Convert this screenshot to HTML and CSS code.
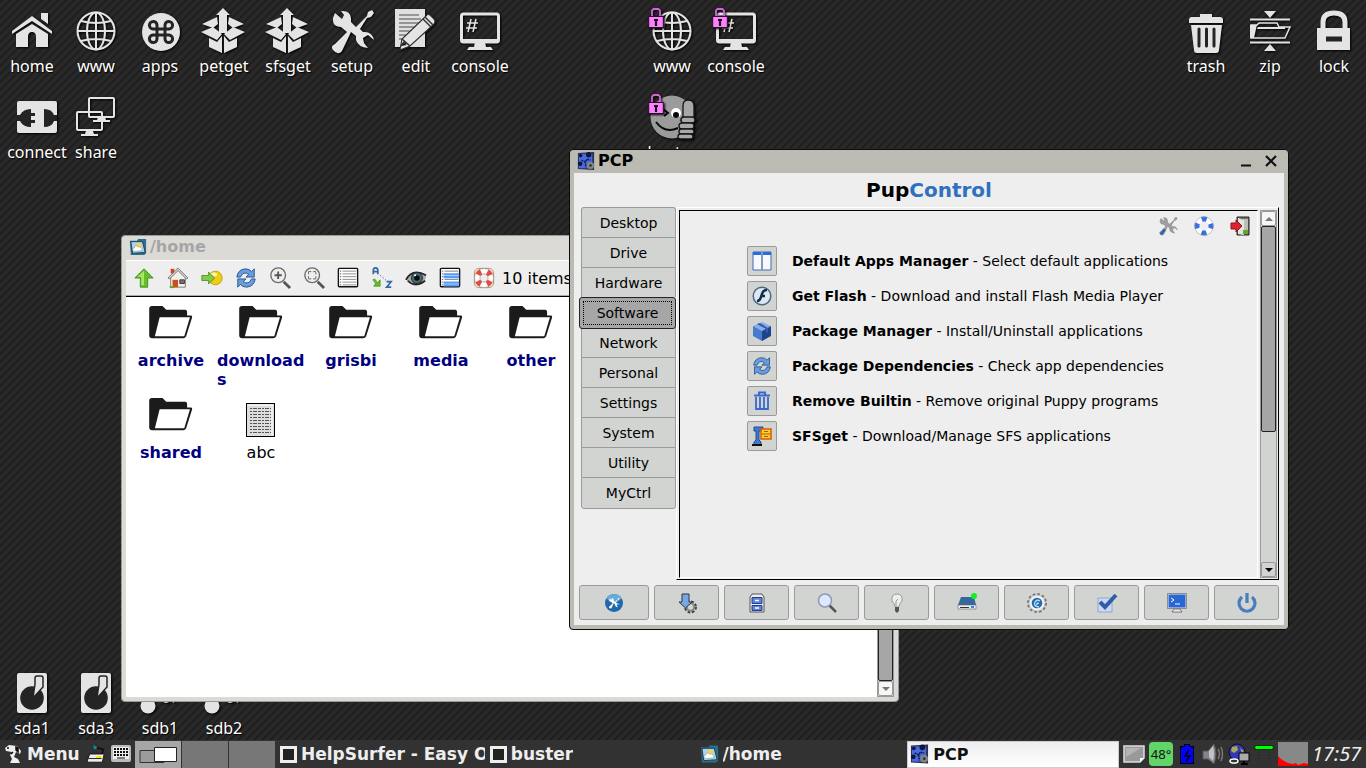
FILE: index.html
```html
<!DOCTYPE html>
<html lang="en">
<head>
<meta charset="utf-8">
<title>Desktop</title>
<link rel="stylesheet" href="styles.css">
</head>
<body>
<svg class="defs" aria-hidden="true">
  <symbol id="globe" viewBox="0 0 48 48"><g fill="none" stroke="#e4e4e4" stroke-width="2"><circle cx="24" cy="24" r="18.500"/><ellipse cx="24" cy="24" rx="9" ry="18.500"/><path d="M24 5v38M5 24h38M9 14q15 4 30 0M9 34q15-4 30 0"/></g></symbol>
  <symbol id="box" viewBox="0 0 48 48"><g fill="#e4e4e4"><path d="M23 1l7 7h-3v18h-8V8h-3z"/><path fill-rule="evenodd" d="M17 10L2 17l11 4 5-4zM29 10l15 7-11 4-5-4z"/><path d="M13 20L1 25l16 8 5-6zM33 20l12 5-15 8-6-6zM9 31l8 4 5-6v17L9 40zM37 31l-8 4-5-6v17l13-6z"/></g></symbol>
  <symbol id="screen" viewBox="0 0 48 48"><rect x="5.500" y="7" width="37" height="28" rx="2" fill="none" stroke="#e4e4e4" stroke-width="3"/><path d="M5 32h38v3H5zM19 35h10l1 5h5l2 3H11l2-3h5z" fill="#e4e4e4"/><path d="M15 12l-3 13M20 12l-3 13M11 16h11M10 21h11" stroke="#e4e4e4" stroke-width="1.500"/></symbol>
  <symbol id="padlock" viewBox="0 0 16 20"><path d="M4 9V2.500L5.500 1h5L12 2.500V9" fill="none" stroke="#d860d8" stroke-width="1.800"/><rect x=".7" y="8.500" width="14.600" height="11" fill="#ff80ff" stroke="#281028"/><path d="M8 11v7M6 12h4" stroke="#111" stroke-width="2.200"/></symbol>
  <symbol id="disk" viewBox="0 0 48 48"><rect x="9" y="4" width="30" height="40" rx="2" fill="#e4e4e4"/><circle cx="24" cy="29" r="11.800" fill="#242424"/><path d="M25 29l2-14V9q0-2 2-2h4q2 0 2 2v9z" fill="#e4e4e4" stroke="#242424" stroke-width="1.500"/></symbol>
  <symbol id="usb" viewBox="0 0 48 48"><g fill="#e4e4e4"><circle cx="12" cy="37" r="7.500"/><circle cx="30" cy="29" r="5"/><path d="M35 28l5 4-3 2z"/></g></symbol>
  <symbol id="folder" viewBox="0 0 48 38"><path d="M4 1h11l4 4h20q2 0 2 3v3h4q2 0 1 3l-6 19q-1 2-3 2H4q-3 0-3-3V4q0-3 3-3z" fill="#1b1b1b"/><path d="M12 13h32l-6 20H7z" fill="#fff"/></symbol>
  <symbol id="gears" viewBox="0 0 20 20"><path d="M1 1l18-1v20L1 19z" fill="#2a3050"/><path d="M2 2h15v16H2z" fill="#4a6be0"/><g fill="#10163a"><circle cx="13" cy="3" r="3"/><circle cx="4" cy="4" r="2"/><circle cx="3.500" cy="13" r="2.500"/></g><path d="M5 9l4 2 2-3 4 1M9 11l1 6" fill="none" stroke="#10163a" stroke-width="1.600" stroke-dasharray="2 .8"/><circle cx="15" cy="15" r="4" fill="#858585"/><circle cx="15" cy="15" r="1.500" fill="#333"/></symbol>
  <symbol id="view" viewBox="0 0 20 20"><path d="M1 3h8l1-2h9v16l-2 2H2z" fill="#2b6f91"/><path d="M2 4h13l3 12-14 1z" fill="#a9d5e6" stroke="#183849"/><circle cx="11" cy="8" r="2.500" fill="#ffd338"/><path d="M5 15q-2-4 1-4 1-4 4-1 4-1 5 4z" fill="#fff" stroke="#7b8d94" stroke-width=".6"/></symbol>
  <symbol id="list" viewBox="0 0 24 24"><rect x="1.500" y="1.500" width="21" height="20" rx="1" fill="#fff" stroke="#111" stroke-width="1.500"/><path d="M6 4.500h15M6 7.500h15M6 10.500h15M6 13.500h15M6 16.500h15M6 19.500h15" stroke="#888"/><path d="M4 4v16" stroke="#222" stroke-dasharray="1 2"/></symbol>
  <symbol id="refresh" viewBox="0 0 24 24"><g fill="#6a9ce0" stroke="#24528f"><path d="M2 11Q3 3 11 2q5 0 7 3l3-3v9h-9l3-3q-6-4-9 3z"/><path d="M22 13q-1 8-9 9-5 0-7-3l-3 3v-9h9l-3 3q6 4 9-3z"/></g></symbol>
  <symbol id="tools" viewBox="0 0 48 48"><path d="M7 6l7 6 2-4-3-4q9-1 10 7v4l5 5L39 9l1-4 4-2 2 3-3 4-4 1-7 11 3 3q9-1 11 8l-6-5-5 3 1 5 4 5q-10-1-12-8v-4l-5-4L14 44q-4 5-9-1-3-4 2-6l12-12-6-5q-9 0-8-9z"/></symbol>
</svg>

<main class="desktop">
  <nav class="top-icons" aria-label="Desktop">
    <div class="icons">
      <button class="launcher"><svg viewBox="0 0 48 48"><path d="M4 24L24 9l20 15v3L24 14 4 27zM33 6h7v11l-7-5zM8 27l16-10 16 10v13H28V30q0-5-4-5t-4 5v10H8z" fill="#e4e4e4"/></svg><span>home</span></button>
      <button class="launcher"><svg><use href="#globe"/></svg><span>www</span></button>
      <button class="launcher"><svg viewBox="0 0 48 48"><circle cx="25" cy="25" r="19" fill="#e4e4e4"/><path d="M21 29V18a3.800 3.800 0 1 0-4 4h16a3.800 3.800 0 1 0-4-4v14a3.800 3.800 0 1 0 4-4H17a3.800 3.800 0 1 0 4 4z" fill="none" stroke="#242424" stroke-width="3"/></svg><span>apps</span></button>
      <button class="launcher"><svg><use href="#box"/></svg><span>petget</span></button>
      <button class="launcher"><svg><use href="#box"/></svg><span>sfsget</span></button>
      <button class="launcher"><svg fill="#e4e4e4"><use href="#tools"/></svg><span>setup</span></button>
      <button class="launcher"><svg viewBox="0 0 48 48"><path d="M3 2h30v38H3z" fill="#e0e0e0"/><path d="M7 8h20M7 12h22M7 16h22M7 20h19M7 24h16M7 28h13M7 32h9" stroke="#7d7d7d" stroke-width="1.500"/><path d="M8 43l2-11L34 9q2-3 5 0l3 3q2 2 0 5L18 39z" fill="#e4e4e4" stroke="#333" stroke-width="1.200"/><path d="M31 12l8 8M33 10l8 8M10 32l8 7M9 39l3-4 2 3" stroke="#333" stroke-width="1.500"/></svg><span>edit</span></button>
      <button class="launcher"><svg><use href="#screen"/></svg><span>console</span></button>
      <button class="launcher wide"><svg viewBox="0 0 48 48"><rect x="4" y="8" width="40" height="32" rx="2" fill="#e4e4e4"/><path d="M4 22h3q3-6 11-6v4h4v3h-4v4h4v3h-4v4q-8 0-11-6H4zM44 22h-3q-2-6-10-6v18q8 0 10-6h3z" fill="#242424"/></svg><span>connect</span></button>
      <button class="launcher"><svg viewBox="0 0 48 48"><g fill="none" stroke="#e4e4e4" stroke-width="2"><rect x="17" y="5" width="25" height="19" rx="1"/><rect x="5" y="19" width="25" height="18" rx="1"/></g><path d="M26 24h7l1 3h4v2H21v-2h4zM14 38h7l1 3h4v2H9v-2h4z" fill="#e4e4e4"/></svg><span>share</span></button>
    </div>
    <div class="icons pair">
      <button class="launcher"><svg><use href="#globe"/></svg><svg class="lock"><use href="#padlock"/></svg><span>www</span></button>
      <button class="launcher"><svg><use href="#screen"/></svg><svg class="lock"><use href="#padlock"/></svg><span>console</span></button>
      <button class="launcher"><svg viewBox="0 0 48 48"><circle cx="24" cy="24" r="21.500" fill="#9b9b9b"/><circle cx="28" cy="20" r="5" fill="#fff"/><circle cx="28" cy="22" r="3" fill="#080808"/><path d="M8 29q9 12 22 6M15 16l5 4-4 3" fill="none" stroke="#080808" stroke-width="2"/><g fill="#a8a8a8" stroke="#151515" stroke-width="1.300"><path d="M35 25V13q0-6 5-6 6 0 6 6v14H33z"/><rect x="33" y="24" width="14" height="6" rx="3"/><rect x="31" y="30" width="15" height="6" rx="3"/><rect x="31" y="36" width="15" height="5" rx="2.500"/><rect x="30" y="41" width="15" height="5" rx="2.500"/></g></svg><svg class="lock"><use href="#padlock"/></svg><span>buster</span></button>
    </div>
    <div class="icons right">
      <button class="launcher"><svg viewBox="0 0 48 48"><path d="M7 13q0-3 3-3h8V7h12v3h8q3 0 3 3v3H7zM9 18h31l-3 25q0 3-3 3H15q-3 0-3-3z" fill="#e4e4e4"/><path d="M17 22v17M24.500 22v17M32 22v17" stroke="#242424" stroke-width="3" stroke-linecap="round"/></svg><span>trash</span></button>
      <button class="launcher"><svg viewBox="0 0 48 48"><path d="M18 4h12l-6 7zM18 44h12l-6-7z" fill="#e4e4e4"/><path d="M4 12.500h40M4 35.500h40" stroke="#e4e4e4" stroke-width="2"/><path d="M5 31V18h6l2-2h18l2 4h11l-5 11z" fill="none" stroke="#e4e4e4" stroke-width="1.500"/><path d="M4 18h7l-1 4-2 9H4zM12 20h27v2H11z" fill="#e4e4e4"/></svg><span>zip</span></button>
      <button class="launcher"><svg viewBox="0 0 48 48"><path d="M13 23v-8q0-9 11-9t11 9v8" fill="none" stroke="#e4e4e4" stroke-width="5"/><rect x="7" y="21" width="33" height="22" fill="#e4e4e4"/><path d="M16 32h16" stroke="#242424" stroke-width="5"/></svg><span>lock</span></button>
    </div>
  </nav>
  <nav class="icons drives" aria-label="Drives">
    <button class="launcher"><svg><use href="#disk"/></svg><span>sda1</span></button>
    <button class="launcher"><svg><use href="#disk"/></svg><span>sda3</span></button>
    <button class="launcher"><svg><use href="#usb"/></svg><span>sdb1</span></button>
    <button class="launcher"><svg><use href="#usb"/></svg><span>sdb2</span></button>
  </nav>

  <section class="window files" aria-label="/home">
    <header class="title"><svg><use href="#view"/></svg><h2>/home</h2></header>
    <div class="toolbar">
      <button aria-label="Up"><svg viewBox="0 0 24 24"><path d="M12 2l10 10h-6v10H8V12H2z" fill="#68bd2d" stroke="#3f901a"/><path d="M12 4v16H9V11H5z" fill="#a7e765"/></svg></button>
      <button aria-label="Home"><svg viewBox="0 0 24 24"><path d="M4 2h4v5H4z" fill="#d14520"/><path d="M4 10l8-7 8 7v12H4z" fill="#f4f1ec" stroke="#777"/><path d="M1 12L12 1l11 11-2 1-9-9-9 9z" fill="#ccc" stroke="#555" stroke-width=".7"/><path d="M6 14h6v8H6z" fill="#d24c18"/><path d="M14 14h5v4h-5z" fill="#777" stroke="#333"/><path d="M3 22h5" stroke="#5ca530" stroke-width="2"/></svg></button>
      <button aria-label="Mount"><svg viewBox="0 0 26 24"><circle cx="17" cy="12" r="8" fill="#efcd13" stroke="#b89900"/><ellipse cx="15" cy="8" rx="4" ry="2.500" fill="#fff799"/><path d="M1 9h8V5l7 7-7 7v-4H1z" fill="#85c84b" stroke="#4b8b20"/></svg></button>
      <button aria-label="Refresh"><svg><use href="#refresh"/></svg></button>
      <button aria-label="Zoom in"><svg viewBox="0 0 24 24"><path d="M16 16l7 7" stroke="#555" stroke-width="3"/><circle cx="10" cy="9" r="8" fill="#eee" stroke="#6b6b67" stroke-width="1.500"/><path d="M6 9h8M10 5v8" stroke="#555" stroke-width="2"/></svg></button>
      <button aria-label="Zoom fit"><svg viewBox="0 0 24 24"><path d="M16 16l7 7" stroke="#555" stroke-width="3"/><circle cx="10" cy="9" r="8" fill="#eee" stroke="#6b6b67" stroke-width="1.500"/><path d="M6 8V5h3M11 5h3v3M14 10v3h-3M9 13H6v-3" fill="none" stroke="#666"/></svg></button>
      <button aria-label="Details"><svg><use href="#list"/></svg></button>
      <button aria-label="Sort"><svg viewBox="0 0 24 24"><path d="M2.500 8V4q0-3 2.500-3t2.500 3v4M2.500 5h5M17 16h5l-5 6h5" fill="none" stroke="#3465a4" stroke-width="1.800"/><path d="M10 9l7 6" stroke="#3465a4" stroke-dasharray="1.500 2"/><path d="M2 14l2-1 3 4 3-3v7H3l2-3z" fill="#65bd27" stroke="#3f8b12" stroke-width=".7"/></svg></button>
      <button aria-label="Hidden"><svg viewBox="0 0 24 24"><path d="M1 13Q8 2 23 9q-1 9-8 11Q7 22 1 13z" fill="#aaa9a4"/><path d="M1 14Q8 1 23 9M3 15q8 8 19 0" stroke="#222" stroke-width="1.800" fill="none"/><circle cx="13" cy="12" r="6" fill="#496873" stroke="#1c292e"/><circle cx="13" cy="12" r="3" fill="#080808"/><circle cx="11" cy="9" r="1.200" fill="#fff"/></svg></button>
      <button aria-label="Select"><svg viewBox="0 0 24 24"><rect x="1.500" y="1.500" width="21" height="20" rx="1" fill="#fff" stroke="#111" stroke-width="1.500"/><path d="M6 4.500h15M6 13.500h15" stroke="#777"/><path d="M5 8h17M5 11h17M5 17h17M5 20h17" stroke="#589cf5" stroke-width="2.500"/><path d="M4 4v16" stroke="#222" stroke-dasharray="1 2"/></svg></button>
      <button aria-label="Help"><svg viewBox="0 0 24 24"><rect x="1.500" y="1.500" width="21" height="21" rx="5" fill="none" stroke="#b78b4d"/><circle cx="12" cy="12" r="7.500" fill="none" stroke="#fff" stroke-width="6"/><circle cx="12" cy="12" r="7.500" fill="none" stroke="#ef4444" stroke-width="6" stroke-dasharray="4.780 7" stroke-dashoffset="-3.500"/><g fill="none" stroke="#777" stroke-width=".6"><circle cx="12" cy="12" r="10.500"/><circle cx="12" cy="12" r="4.500"/></g></svg></button>
      <span class="count">10 items</span>
    </div>
    <div class="file-pane">
      <ul class="file-grid">
        <li><svg><use href="#folder"/></svg><b>archive</b></li>
        <li><svg><use href="#folder"/></svg><b>downloads</b></li>
        <li><svg><use href="#folder"/></svg><b>grisbi</b></li>
        <li><svg><use href="#folder"/></svg><b>media</b></li>
        <li><svg><use href="#folder"/></svg><b>other</b></li>
        <li><svg><use href="#folder"/></svg><b>shared</b></li>
        <li><svg class="doc" viewBox="0 0 30 35"><rect x=".5" y=".5" width="28" height="33" fill="#ddd" stroke="#000"/><path d="M2 2h24v30" fill="none" stroke="#fff"/><g stroke="#555" stroke-dasharray="2 1 4 1 3 1"><path d="M4 5.500h21M4 8.500h21M4 11.500h21M4 14.500h21M4 17.500h21M4 20.500h21M4 23.500h21M4 26.500h21M4 29.500h21"/></g></svg><span>abc</span></li>
      </ul>
      <div class="scroll pale"><i class="thumb"></i><button class="arrow" aria-label="Scroll down"><svg viewBox="0 0 12 12"><path d="M2 4h8L6 8z" fill="#777"/></svg></button></div>
    </div>
  </section>

  <section class="window pcp" aria-label="PCP">
    <header class="title"><svg><use href="#gears"/></svg><h2>PCP</h2>
      <button class="wbtn" aria-label="Minimize"><svg viewBox="0 0 12 12"><path d="M1 10.500h10" stroke="#111" stroke-width="2"/></svg></button>
      <button class="wbtn" aria-label="Close"><svg viewBox="0 0 12 12"><path d="M1 1l10 10M11 1L1 11" stroke="#111" stroke-width="2.200"/></svg></button>
    </header>
    <div class="panel">
      <h1>Pup<em>Control</em></h1>
      <div class="work">
        <nav class="tabs">
          <button>Desktop</button><button>Drive</button><button>Hardware</button><button class="active"><span>Software</span></button><button>Network</button><button>Personal</button><button>Settings</button><button>System</button><button>Utility</button><button>MyCtrl</button>
        </nav>
        <div class="frame">
          <div class="view">
            <div class="quick">
              <button aria-label="Preferences"><svg viewBox="0 0 48 48"><use href="#tools" width="48" height="48" fill="#9b9fa3" stroke="#777" stroke-width="1"/><path d="M14 30l5 4-9 11q-4 1-6-3z" fill="#2d63ad"/></svg></button>
              <button aria-label="Help"><svg viewBox="0 0 20 20"><circle cx="10" cy="10" r="7" fill="none" stroke="#fff" stroke-width="5"/><circle cx="10" cy="10" r="7" fill="none" stroke="#386fe0" stroke-width="5" stroke-dasharray="5 6" stroke-dashoffset="2.500"/><circle cx="10" cy="10" r="9.300" fill="none" stroke="#999" stroke-width=".6"/></svg></button>
              <button aria-label="Exit"><svg viewBox="0 0 20 20"><path d="M7 1h12v18H7z" fill="#6d7564" stroke="#222"/><path d="M13 3h5v15h-5z" fill="#b9c1b4"/><path d="M8 2l6 2v15l-6-1z" fill="#e3e6df"/><path d="M13 14h5v4h-5z" fill="#68a52b"/><path d="M1 7h5V4l6 6-6 6v-3H1z" fill="#dc262f" stroke="#8c1017"/></svg></button>
            </div>
            <ul class="apps">
              <li><button id="a1"><svg viewBox="0 0 20 20"><path d="M1 1h18v18H1z" fill="#f7f9ff" stroke="#3d69b5"/><path d="M1 2.500h18" stroke="#286de0" stroke-width="3"/><path d="M10 1v18" stroke="#8598b5" stroke-width="2"/></svg></button><label for="a1"><b>Default Apps Manager</b> - Select default applications</label></li>
              <li><button id="a2"><svg viewBox="0 0 20 20"><circle cx="10" cy="10" r="8.800" fill="#dce7f2" stroke="#4e6680" stroke-width="1.500"/><path d="M15 4q-4 0-5 4l-1 3q-1 4-4 4M9 10h4" fill="none" stroke="#102d4d" stroke-width="2.500"/></svg></button><label for="a2"><b>Get Flash</b> - Download and install Flash Media Player</label></li>
              <li><button id="a3"><svg viewBox="0 0 20 20"><path d="M10 1l9 4-9 5-9-5z" fill="#88ade8"/><path d="M1 5l9 5v10l-9-5z" fill="#477bcf"/><path d="M19 5l-9 5v10l9-5z" fill="#1e438f"/><path d="M5 3l9 5v4l2-1V7L8 2z" fill="#315db1"/></svg></button><label for="a3"><b>Package Manager</b> - Install/Uninstall applications</label></li>
              <li><button id="a4"><svg><use href="#refresh"/></svg></button><label for="a4"><b>Package Dependencies</b> - Check app dependencies</label></li>
              <li><button id="a5"><svg viewBox="0 0 20 20"><path d="M2 4.500h16M7 4V1.500h6V4" fill="none" stroke="#3869ce" stroke-width="2"/><path d="M4 6v12h12V6M8 6v12M12 6v12" fill="none" stroke="#3869ce" stroke-width="1.800"/></svg></button><label for="a5"><b>Remove Builtin</b> - Remove original Puppy programs</label></li>
              <li><button id="a6"><svg viewBox="0 0 20 20"><path d="M2 1h9v4H7v9l2 2v3H2v-3l2-2V5H2z" fill="#3d7bd0" stroke="#204c8e"/><path d="M0 19h10" stroke="#111" stroke-width="2"/><path d="M9 3h10v10H9z" fill="#ffd030" stroke="#e05a00" stroke-width="1.500"/><path d="M10 8h8M12 5.500h4M12 10.500h4" stroke="#a65c00"/></svg></button><label for="a6"><b>SFSget</b> - Download/Manage SFS applications</label></li>
            </ul>
          </div>
          <div class="scroll"><button class="arrow light" aria-label="Scroll up"><svg viewBox="0 0 12 12"><path d="M2 8h8L6 4z" fill="#777"/></svg></button><i class="thumb"></i><i class="track"></i><button class="arrow" aria-label="Scroll down"><svg viewBox="0 0 12 12"><path d="M2 4h8L6 8z" fill="#000"/></svg></button></div>
        </div>
      </div>
      <div class="actions">
        <button aria-label="Wizards"><svg viewBox="0 0 20 20"><circle cx="10" cy="10" r="9" fill="#1f68ab"/><ellipse cx="10" cy="5" rx="7" ry="4" fill="#69a9d7"/><use href="#tools" x="4" y="4" width="12" height="12" fill="#fff"/></svg></button>
        <button aria-label="Install"><svg viewBox="0 0 20 20"><circle cx="13.500" cy="14" r="4" fill="none" stroke="#444" stroke-width="5" stroke-dasharray="2 1.140"/><circle cx="13.500" cy="14" r="3.700" fill="#d2d4d1" stroke="#888" stroke-width="2"/><path d="M5 1h7v8h3l-6.500 6L2 9h3z" fill="#76a9e4" stroke="#334"/></svg></button>
        <button aria-label="Files"><svg viewBox="0 0 20 20"><path d="M3 4l2-3h10l2 3v15H3z" fill="#eee" stroke="#555"/><path d="M5 4.500h10v6H5zM5 12.500h10v5H5z" fill="#5b82d8" stroke="#233f8d"/><path d="M8 7.500h4M8 15h4" stroke="#fff" stroke-width="1.500"/></svg></button>
        <button aria-label="Search"><svg viewBox="0 0 20 20"><path d="M12 12l7 7" stroke="#555" stroke-width="2.500"/><circle cx="8" cy="7.500" r="6.500" fill="#dceaff" stroke="#9197b4" stroke-width="1.500"/></svg></button>
        <button aria-label="Tips"><svg viewBox="0 0 20 20"><path d="M8 14q0-3-3-6-1-7 5-7t5 7q-3 3-3 6z" fill="#ededed" stroke="#999"/><path d="M8 14h4v4l-2 2-2-2z" fill="#555"/><path d="M9 13V8l2-2" fill="none" stroke="#999"/></svg></button>
        <button aria-label="Drive"><svg viewBox="0 0 20 20"><path d="M4 4h13l2 8H1z" fill="#34699d"/><path d="M1 12h18v4H1z" fill="#eee" stroke="#666" stroke-width=".6"/><path d="M3 14.500h9" stroke="#333"/><path d="M14 14h3" stroke="#3584ff" stroke-width="2"/><circle cx="17" cy="3" r="3" fill="#10ef28"/></svg></button>
        <button aria-label="Settings"><svg viewBox="0 0 20 20"><circle cx="10" cy="10" r="8.500" fill="none" stroke="#777" stroke-width="3" stroke-dasharray="2.500 1.950"/><circle cx="10" cy="10" r="8" fill="#f1f1f1" stroke="#aaa" stroke-width=".6"/><circle cx="10" cy="10" r="5.300" fill="#216cad"/><path d="M12 14q-6-1-4-5 2-3 5-1M10 12q-1-2 2-2" fill="none" stroke="#bfe3f7" stroke-width="1.300"/></svg></button>
        <button aria-label="Defaults"><svg viewBox="0 0 20 20"><path d="M1 5h14v14H1z" fill="#cbd9f2" stroke="#93a6ca"/><path d="M3 9l5 5L19 2" fill="none" stroke="#315fa7" stroke-width="4"/></svg></button>
        <button aria-label="Console"><svg viewBox="0 0 20 20"><path d="M1 1h18v14H1z" fill="#2867d4" stroke="#e7e7e7"/><path d="M.5.500h19v15H.500z" fill="none" stroke="#555" stroke-width=".6"/><path d="M4 5l3 2-3 2M8 11h5" fill="none" stroke="#fff"/><path d="M7 16h6l2 3H5z" fill="#eee" stroke="#777"/></svg></button>
        <button aria-label="Power"><svg viewBox="0 0 20 20"><path d="M5 4a8 8 0 1 0 10 0M10 0v10" fill="none" stroke="#477ebd" stroke-width="3.200"/></svg></button>
      </div>
    </div>
  </section>
</main>

<footer class="taskbar">
  <button class="menu"><svg viewBox="0 0 20 20"><path d="M1 4l4-3 8 1 4 5-1 3-4-2-2 5 4 2 2 4H6l2-4-2-4 2-3-6-1z" fill="#eee"/><path d="M12 3l2 1v4l-2-2zM3 4h2M9 8l-2 2" stroke="#111" stroke-width="1.500" fill="#111"/></svg>Menu</button>
  <button class="mini" aria-label="Show desktop"><svg viewBox="0 0 22 22"><path d="M8 1l5 3-4 2z" fill="#009c9c"/><path d="M12 4l7 2-2 6" fill="none" stroke="#111" stroke-width="2"/><path d="M4 11h16l-2 9H1z" fill="#eee" stroke="#111"/><path d="M11 14l5-1 2 3h-7z" fill="#f5e600"/><path d="M3 16h14" stroke="#111"/></svg></button>
  <button class="mini" aria-label="Keyboard"><svg viewBox="0 0 22 20"><rect x="1" y="1" width="20" height="17" rx="2" fill="#bbb"/><path d="M3 3h16v12H3z" fill="#eee"/><path d="M4 5h14M4 8h14M4 11h14" stroke="#111" stroke-width="2" stroke-dasharray="2 1"/><path d="M7 14h8" stroke="#111"/></svg></button>
  <div class="pager"><button class="current" aria-label="Desktop 1"><svg viewBox="0 0 46 26"><path d="M5 9.500h24v12H5z" fill="#9c9c9c" stroke="#333"/><path d="M19.500 6.500h22v14h-22z" fill="#fff" stroke="#222"/></svg></button><button aria-label="Desktop 2"></button><button aria-label="Desktop 3"></button></div>
  <nav class="tasks">
    <button><i class="square"></i><span>HelpSurfer - Easy OS</span></button>
    <button><i class="square"></i><span>buster</span></button>
    <button><svg><use href="#view"/></svg><span>/home</span></button>
    <button class="on"><svg><use href="#gears"/></svg><span>PCP</span></button>
  </nav>
  <div class="tray">
    <svg class="note" viewBox="0 0 22 18"><path d="M1 1h20v12l-4 4H1z" fill="#999" stroke="#ddd" stroke-width="1.500"/><path d="M3 3h15L3 12z" fill="#b4b4b4"/><path d="M21 13h-4v4z" fill="#fff"/></svg>
    <span class="temp">48°</span>
    <svg class="battery" viewBox="0 0 14 20"><path d="M4 0h6v2h4v18H0V2h4z" fill="#000"/><path d="M5 1h4v2h4v16H1V3h4z" fill="#00f"/><path d="M9 6l-4 6h5l-4 5" fill="none" stroke="#000" stroke-width="1.500"/></svg>
    <svg class="sound" viewBox="0 0 22 22"><path d="M1 8h5l6-7q4 10 0 20l-6-5H1z" fill="#858589" stroke="#555"/><path d="M7 8l4-5q2 8 0 15l-4-4z" fill="#c3c3cc"/><path d="M16 6q3 5 0 10M19 4q3 7 0 14" fill="none" stroke="#777" stroke-width="1.500"/></svg>
    <svg class="net" viewBox="0 0 22 22"><circle cx="9" cy="9" r="8" fill="#3338b7" stroke="#111"/><path d="M4 4l5-1 1 4-4 3-3-2zM12 5l4 3-2 2z" fill="#a3aa57"/><path d="M11 10h10v8H11z" fill="#aaa" stroke="#000"/><path d="M13 21h7M16 18v2" stroke="#000" stroke-width="2"/><ellipse cx="6" cy="18" rx="4" ry="2" fill="none" stroke="#fff" stroke-width="1.500"/></svg>
    <svg class="meter" viewBox="0 0 20 22"><rect x=".5" y="2.500" width="19" height="4" rx="2" fill="#0f0" stroke="#082808"/><path d="M5 9v11M15 9v11" stroke="#222" stroke-dasharray="1 2"/></svg>
    <svg class="graph" viewBox="0 0 30 24"><path d="M0 0h30v24H0z" fill="#888"/><path d="M0 24V14l3 3 3 2 4 2 5 1 3-1 2 2 3-1 3-1 4 1v2z" fill="#f00"/></svg>
    <time>17:57</time>
  </div>
</footer>
</body>
</html>
```
FILE: styles.css
```css
* { box-sizing: border-box; }
body {
  margin: 0;
  min-height: 100vh;
  display: flex;
  flex-direction: column;
  overflow: hidden;
  background-color: #262626;
  background-image: linear-gradient(135deg, #202020 20%, #292929 30%, #292929 50%, #202020 55%, #202020 70%, #292929 80%);
  background-size: 8px 8px;
  font-family: "DejaVu Sans", sans-serif;
  font-size: 14px;
  color: #000;
}
button { font: inherit; color: inherit; background: none; border: 0; padding: 0; margin: 0; }
h1, h2, ul { margin: 0; padding: 0; list-style: none; }
svg { display: block; flex: none; overflow: visible; }
.defs { position: absolute; width: 0; height: 0; }

.desktop { position: relative; flex: 1; display: flex; flex-direction: column; justify-content: space-between; }
.top-icons { display: grid; grid-template-columns: 640px 128px 1fr; padding-top: 7px; }
.icons { display: grid; grid-template-columns: repeat(8, 64px); row-gap: 16px; align-content: start; }
.pair { grid-template-columns: repeat(2, 64px); }
.right { grid-template-columns: repeat(3, 64px); justify-content: end; }
.drives { padding-bottom: 1px; }
.launcher {
  position: relative;
  display: flex;
  flex-direction: column;
  align-items: center;
  font: 16px/22px "Noto Sans", sans-serif;
  color: #fff;
  text-shadow: 1px 1px 1px #000;
}
.launcher svg { width: 48px; height: 48px; filter: drop-shadow(1px 1px 1px #000); }
.launcher svg.lock { position: absolute; left: 8px; top: 1px; width: 16px; height: 20px; }
.launcher.wide { padding-left: 10px; }

.window { position: absolute; display: flex; flex-direction: column; border-radius: 4px; }
.title { display: flex; align-items: center; gap: 3px; height: 24px; padding: 0 2px 2px 3px; }
.title svg { width: 18px; height: 18px; }
.title h2 { font-size: 16px; line-height: 20px; flex: 1; }
.wbtn { width: 22px; display: flex; justify-content: center; }
.title .wbtn svg { width: 12px; height: 12px; }

.files { left: 121px; top: 235px; width: 778px; height: 467px; padding: 0 4px 4px; background: #dbdad5; border: 1px solid #999; }
.files .title h2 { color: #a5a5a5; }
.toolbar { display: flex; align-items: center; height: 37px; padding: 0 0 1px 1px; background: #eee; border-top: 1px solid #fff; border-bottom: 1px solid #000; box-shadow: inset 0 -1px #aaa; }
.toolbar button { width: 34px; display: flex; justify-content: center; }
.toolbar svg { width: 22px; height: 22px; }
.count { font-size: 16px; white-space: nowrap; margin-left: 1px; }
.file-pane { flex: 1; display: flex; background: #fff; min-height: 0; }
.file-grid { flex: 1; display: grid; grid-template-columns: repeat(5, 90px); align-content: start; padding-top: 8px; }
.file-grid li { display: flex; flex-direction: column; align-items: center; height: 92px; font-size: 16px; line-height: 19px; }
.file-grid svg { width: 46px; height: 36px; margin-bottom: 10px; }
.file-grid svg.doc { width: 30px; height: 35px; margin: 6px 0 5px; }
.file-grid b { max-width: 88px; color: #000080; overflow-wrap: anywhere; }

.scroll { width: 17px; display: flex; flex-direction: column; background: #d2d4d1; padding: 0; border: 1px solid #999; }
.thumb { flex: 1; background: #a6a6a6; border: 1px solid #222; border-radius: 2px; }
.arrow { height: 15px; display: flex; align-items: center; justify-content: center; background: #d2d4d1; border: 1px solid #999; border-radius: 2px; }
.arrow svg { width: 12px; height: 12px; }
.pale .arrow, .arrow.light { background: #f6f6f6; }

.pcp { left: 569px; top: 149px; width: 720px; height: 481px; padding: 0 4px 4px; background: #bbbab3; border: 1px solid #0c0c0c; }
.pcp .title { height: 23px; }
.panel { flex: 1; display: flex; flex-direction: column; background: #eee; padding: 0 5px 5px; min-height: 0; }
h1 { font-size: 20px; line-height: 34px; text-align: center; }
h1 em { font-style: normal; color: #3070c0; }
.work { flex: 1; display: flex; min-height: 0; }
.tabs { width: 97px; display: flex; flex-direction: column; }
.tabs button { height: 30px; margin-left: 2px; background: #d2d4d1; border: 1px solid #999b98; border-bottom: 0; }
.tabs button:first-child { border-radius: 3px 3px 0 0; }
.tabs button:last-child { height: 32px; padding-bottom: 1px; border-bottom: 1px solid #999b98; border-radius: 0 0 3px 3px; }
.tabs .active { position: relative; height: 32px; margin: 0 0 -2px; padding: 3px; background: #a6a6a6; border: 1px solid #222; border-radius: 3px; }
.active span { display: block; line-height: 22px; border: 1px dotted #000; }
.frame { flex: 1; display: flex; padding: 2px 1px 1px 2px; border: 1px solid; border-color: #fff #000 #000 #fff; min-width: 0; }
.view { flex: 1; border: 1px solid; border-color: #000 #fff #fff #000; margin-right: 2px; }
.quick { display: flex; justify-content: flex-end; gap: 16px; padding: 5px 7px 0; }
.quick svg { width: 20px; height: 20px; }
.apps { padding: 10px 0 0 67px; display: grid; row-gap: 5px; }
.apps li { display: flex; align-items: center; gap: 15px; }
.apps button { width: 30px; height: 30px; display: grid; place-items: center; background: #d2d4d1; border: 1px solid #999b98; border-radius: 2px; }
.apps svg { width: 20px; height: 20px; }
.pcp .thumb { flex: 208 1 0; }
.track { flex: 132 1 0; }
.actions { display: flex; gap: 5px; padding-top: 5px; }
.actions button { flex: 1; height: 35px; display: grid; place-items: center; background: #d2d4d1; border: 1px solid #999b98; border-radius: 3px; }
.actions button:first-child { flex: 0 0 70px; }
.actions svg { width: 20px; height: 20px; }

.taskbar { height: 28px; display: flex; align-items: center; background: #323232; color: #eee; font-size: 17px; font-weight: bold; }
.menu { display: flex; align-items: center; gap: 3px; width: 85px; padding-left: 4px; }
.menu svg { width: 20px; height: 20px; }
.mini { width: 25px; }
.mini svg { width: 22px; height: 20px; }
.pager { display: flex; gap: 1px; height: 27px; }
.pager button { width: 46px; background: #777; }
.pager .current { background: #a6a6a6; }
.tasks { flex: 1; display: flex; height: 27px; padding-left: 3px; }
.tasks button { flex: 1; min-width: 0; display: flex; align-items: center; gap: 4px; padding: 0 3px 0 2px; white-space: nowrap; }
.tasks span { overflow: hidden; }
.tasks svg { width: 19px; height: 20px; }
.square { flex: none; width: 17px; height: 17px; border: 3px solid #eee; background: #222; }
.tasks .on { background: linear-gradient(#eee, #fff); color: #111; font-size: 16px; border: 1px solid #ccc; }
.tray { display: flex; align-items: center; gap: 4px; width: 247px; padding-left: 4px; }
.tray svg { flex: none; }
.note { width: 22px; height: 18px; }
.temp { flex: none; width: 24px; height: 24px; border-radius: 4px; background: #62d568; color: #111; font: 13px/24px "Noto Sans", sans-serif; text-align: center; white-space: nowrap; }
.battery { width: 14px; height: 20px; margin: 0 4px 0 3px; }
.sound, .net { width: 22px; height: 22px; }
.meter { width: 20px; height: 22px; }
.graph { width: 30px; height: 24px; }
time { font: italic 20px/26px "Noto Sans", sans-serif; color: #eee; }
```
